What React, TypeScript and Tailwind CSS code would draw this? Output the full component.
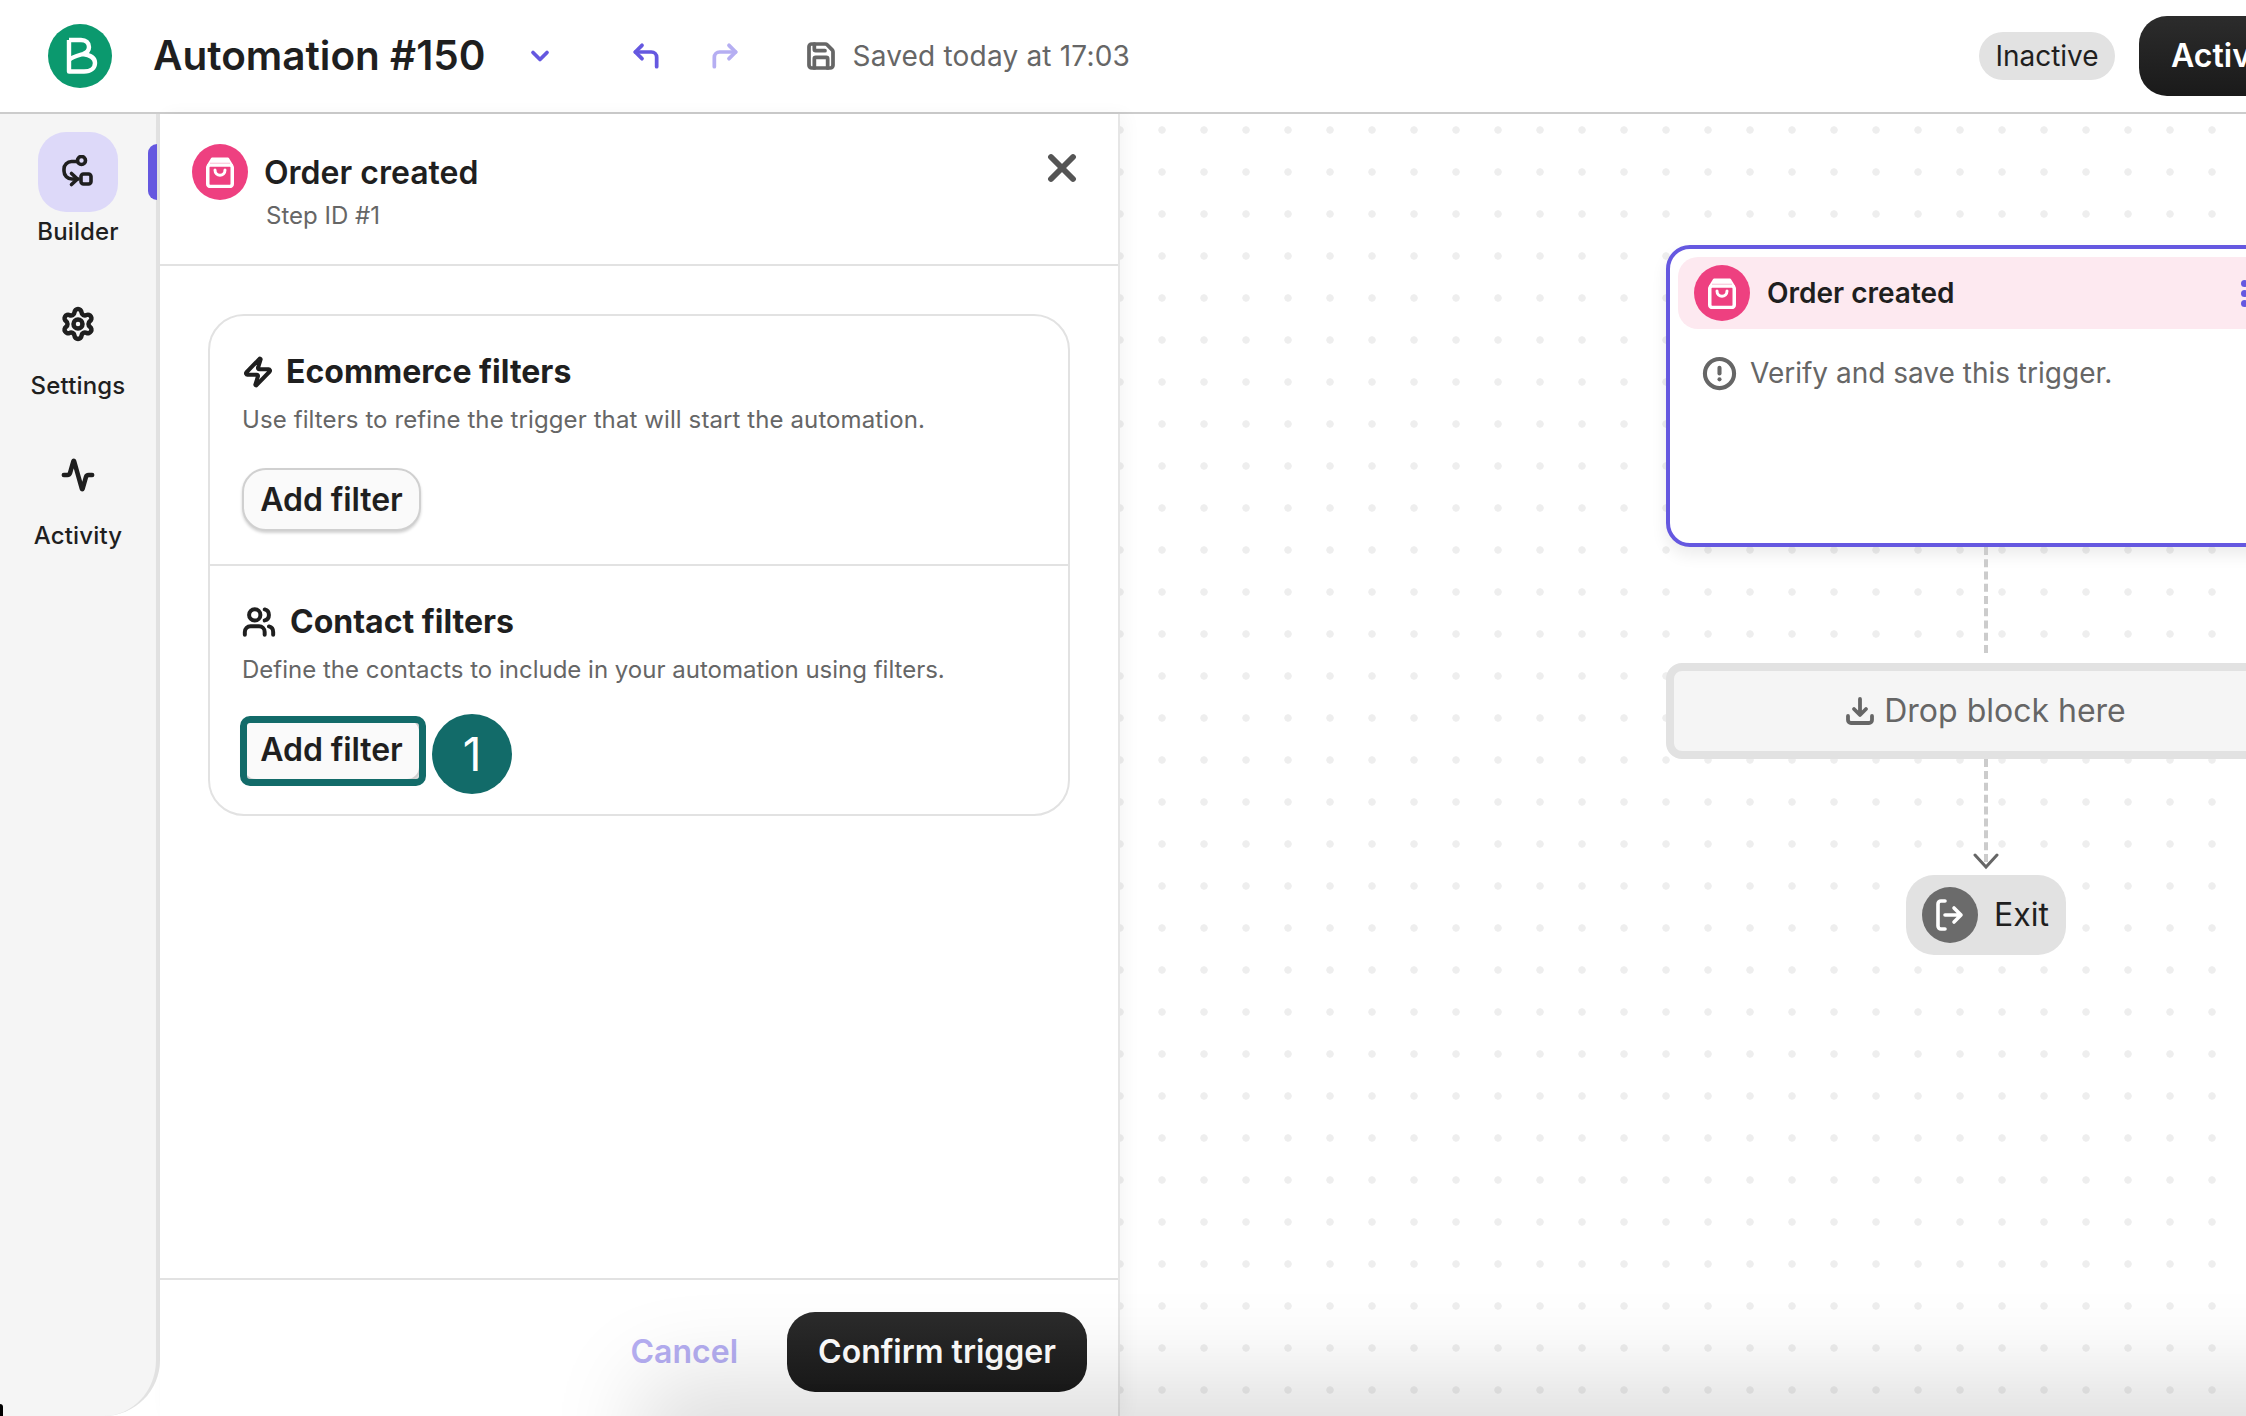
import React from 'react';
import { Activity, ChevronDown, CircleAlert, CornerUpLeft, CornerUpRight, Save, Settings, Users, X, Zap } from 'lucide-react';

const BagIcon: React.FC<{ className?: string }> = ({ className }) => (
  <svg viewBox="0 0 28 31" className={className} fill="none">
    <path d="M6 1.5H22L26 8H2Z" fill="#fff" stroke="#fff" strokeWidth="2" strokeLinejoin="round" />
    <path d="M4 6.6H24" stroke="#ee4080" strokeWidth="1.4" />
    <rect x="1.75" y="8" width="24.5" height="21.5" rx="2.5" fill="#ee4080" stroke="#fff" strokeWidth="3.5" />
    <path d="M9 13C9 20 19 20 19 13" stroke="#fff" strokeWidth="3" strokeLinecap="round" />
  </svg>
);

const BuilderIcon = () => (
  <svg viewBox="0 0 34 34" className="h-[34px] w-[34px]" fill="none" stroke="#1f1f1f" strokeWidth="3.6" strokeLinecap="round" strokeLinejoin="round">
    <circle cx="20.5" cy="5.5" r="4" />
    <rect x="20" y="19" width="10" height="10" rx="2.5" />
    <path d="M16 6.5H10.5A7.5 7.5 0 0 0 3 14V16A8 8 0 0 0 11 24H17" />
    <path d="M10.5 18.5L16.5 24L10.5 29.5" />
  </svg>
);

const AddFilter: React.FC<{ className?: string }> = ({ className }) => (
  <button className={`flex h-[63px] w-[179px] items-center justify-center border-2 border-[#d0d0d0] bg-[#fafafa] text-[32px] font-semibold tracking-[-0.1px] text-[#1f1f1f] shadow-[0_2px_3px_rgba(0,0,0,0.18)] ${className ?? 'rounded-[24px]'}`}>
    Add filter
  </button>
);

const NavItem: React.FC<{ label: string; children: React.ReactNode; className?: string }> = ({ label, children, className }) => (
  <div className={`flex flex-col items-center ${className ?? ''}`}>
    {children}
    <span className="text-[24px] leading-[30px] font-medium tracking-[0.15px] text-[#1f1f1f]">{label}</span>
  </div>
);

export default function App() {
  return (
    <div className="relative flex h-screen w-full flex-col overflow-hidden bg-white font-['Inter',sans-serif]">
      {/* top bar */}
      <header className="flex h-[114px] shrink-0 items-center border-b-2 border-[#cccccc] bg-white">
        <div className="ml-[48px] flex h-[64px] w-[64px] shrink-0 items-center justify-center rounded-full bg-[#0b996e]">
          <svg viewBox="0 0 64 64" className="h-[64px] w-[64px]" fill="none" stroke="#fff" strokeWidth="4.4" strokeLinejoin="round">
            <path d="M21 16H33C38 16 41 19 41 23C41 27 38 29 35 30C30 31.5 24 33 21 36M35 30C42 31 47 34 47 39C47 44 43 47.5 36 47.5H21V16" />
          </svg>
        </div>
        <h1 className="ml-[41px] text-[40.5px] leading-none font-semibold whitespace-nowrap text-[#1f1f1f]">Automation #150</h1>
        <ChevronDown className="ml-[41px] h-[28px] w-[28px] text-[#6558e0]" strokeWidth={3.2} />
        <CornerUpLeft className="ml-[76px] h-[32px] w-[32px] text-[#6558e0]" strokeWidth={2.8} />
        <CornerUpRight className="ml-[47px] h-[32px] w-[32px] text-[#b5aef2]" strokeWidth={2.8} />
        <Save className="ml-[64px] h-[32px] w-[32px] text-[#666666]" strokeWidth={2.8} />
        <span className="ml-[15px] text-[28px] tracking-[0.2px] whitespace-nowrap text-[#666666]">Saved today at 17:03</span>
        <span className="ml-auto flex h-[48px] w-[136px] shrink-0 items-center justify-center rounded-[24px] bg-[#e2e2e2] text-[28px] text-[#1f1f1f]">Inactive</span>
        <button className="mr-[-94px] ml-[24px] h-[80px] w-[201px] shrink-0 rounded-[28px] bg-gradient-to-b from-[#2c2c2c] to-[#1a1a1a] pr-[9px] text-[32px] font-semibold text-white">Activate</button>
      </header>

      <div className="flex min-h-0 flex-1">
        {/* nav rail */}
        <nav className="relative z-10 flex w-[160px] shrink-0 flex-col items-center rounded-br-[56px] border-r-4 border-[#e2e2e2] bg-[#f5f5f5] pt-[18px]">
          <NavItem label="Builder">
            <div className="mb-[5px] flex h-[80px] w-[80px] items-center justify-center rounded-[28px] bg-[#ddd9f9]">
              <BuilderIcon />
            </div>
          </NavItem>
          <NavItem label="Settings" className="mt-[59px]">
            <Settings className="mb-[29px] h-[36px] w-[36px] text-[#1f1f1f]" strokeWidth={3} />
          </NavItem>
          <NavItem label="Activity" className="mt-[57px]">
            <Activity className="mb-[29px] h-[34px] w-[34px] text-[#1f1f1f]" strokeWidth={3.2} />
          </NavItem>
          <div className="absolute top-[30px] right-[-1px] h-[56px] w-[9px] rounded-l-[10px] bg-[#6558e0]" />
        </nav>

        {/* trigger panel */}
        <aside className="relative z-10 flex w-[960px] shrink-0 flex-col border-r-2 border-[#e6e6e6] bg-white shadow-[6px_0_16px_rgba(0,0,0,0.04)]">
          <div className="relative h-[152px] shrink-0 border-b-2 border-[#e2e2e2] pt-[30px] pl-[32px]">
            <div className="flex items-center">
              <div className="flex h-[56px] w-[56px] items-center justify-center rounded-full bg-[#ee4080]">
                <BagIcon className="h-[31px] w-[28px]" />
              </div>
              <span className="ml-[16px] pt-[2px] text-[32px] leading-none font-semibold text-[#1f1f1f]">Order created</span>
            </div>
            <p className="mt-[1px] ml-[74px] text-[24px] leading-[30px] text-[#666666]">Step ID #1</p>
            <X className="absolute top-[32px] right-[34px] h-[44px] w-[44px] text-[#555555]" strokeWidth={3.2} />
          </div>

          <div className="flex-1 px-[48px] pt-[48px]">
            <div className="h-[502px] rounded-[36px] border-2 border-[#e2e2e2]">
              <section className="h-[250px] border-b-2 border-[#e2e2e2] pt-[36px] pl-[32px]">
                <div className="flex items-center">
                  <Zap className="h-[32px] w-[32px] text-[#1f1f1f]" strokeWidth={3} />
                  <h2 className="ml-[12px] text-[32px] leading-[40px] font-bold text-[#1f1f1f]">Ecommerce filters</h2>
                </div>
                <p className="mt-[11px] text-[24px] leading-[34px] tracking-[0.1px] text-[#666666]">Use filters to refine the trigger that will start the automation.</p>
                <div className="mt-[31px]"><AddFilter /></div>
              </section>
              <section className="relative pt-[36px] pl-[32px]">
                <div className="flex items-center">
                  <Users className="h-[34px] w-[34px] text-[#1f1f1f]" strokeWidth={2.8} />
                  <h2 className="ml-[14px] text-[32px] leading-[40px] font-bold text-[#1f1f1f]">Contact filters</h2>
                </div>
                <p className="mt-[11px] text-[24px] leading-[34px] text-[#666666]">Define the contacts to include in your automation using filters.</p>
                <div className="mt-[31px]"><AddFilter className="rounded-[14px]" /></div>
                <div className="absolute top-[150px] left-[30px] h-[70px] w-[186px] rounded-[10px] border-[7px] border-[#126b69]" />
                <div className="absolute top-[148px] left-[222px] flex h-[80px] w-[80px] items-center justify-center rounded-full bg-[#126b69] text-[46px] text-white">1</div>
              </section>
            </div>
          </div>

          <footer className="relative z-10 flex h-[138px] shrink-0 items-center justify-end border-t-2 border-[#e2e2e2] pt-[8px] pr-[31px]">
            <span className="mr-[49px] text-[32px] font-semibold text-[#b5aef2]">Cancel</span>
            <button className="h-[80px] w-[300px] rounded-[28px] bg-gradient-to-b from-[#2c2c2c] to-[#1a1a1a] text-[32px] font-semibold text-white">Confirm trigger</button>
          </footer>
        </aside>

        {/* canvas */}
        <main className="relative flex-1 bg-[radial-gradient(circle,#eeeeee_3.4px,transparent_4px)] bg-[size:42px_42px] bg-[position:-21px_-5px]">
          <div className="absolute top-[131px] left-[546px] h-[302px] w-[640px] rounded-[24px] border-4 border-[#6558e0] bg-white shadow-[0_8px_16px_rgba(0,0,0,0.08)]">
            <div className="mx-[8px] mt-[8px] flex h-[72px] items-center rounded-[20px] bg-[#fde9f0] pl-[16px]">
              <div className="flex h-[56px] w-[56px] shrink-0 items-center justify-center rounded-full bg-[#ee4080]">
                <BagIcon className="h-[31px] w-[28px]" />
              </div>
              <span className="ml-[17px] text-[28px] font-semibold whitespace-nowrap text-[#1f1f1f]">Order created</span>
              <div className="ml-[286px] flex flex-col gap-[3px]">
                <span className="h-[7px] w-[7px] rounded-full bg-[#6558e0]" />
                <span className="h-[7px] w-[7px] rounded-full bg-[#6558e0]" />
                <span className="h-[7px] w-[7px] rounded-full bg-[#6558e0]" />
              </div>
            </div>
            <div className="mt-[23px] flex items-center pl-[32px]">
              <CircleAlert className="h-[35px] w-[35px] text-[#666666]" strokeWidth={2.8} />
              <span className="ml-[13px] text-[28px] text-[#666666]">Verify and save this trigger.</span>
            </div>
          </div>

          <div className="absolute top-[433px] left-[864px] h-[106px] border-l-4 border-dashed border-[#cccccc]" />

          <div className="absolute top-[549px] left-[546px] flex h-[96px] w-[640px] items-center justify-center rounded-[16px] border-8 border-[#e2e2e2] bg-[#f5f5f5] text-[32px] text-[#666666]">
            <svg viewBox="0 0 28 28" className="mr-[10px] h-[28px] w-[28px]" fill="none" stroke="#666666" strokeWidth="3.8" strokeLinecap="round" strokeLinejoin="round">
              <path d="M14 2V17M8 12L14 18L20 12" />
              <path d="M2 19V23A3 3 0 0 0 5 26H23A3 3 0 0 0 26 23V19" />
            </svg>
            Drop block here
          </div>

          <div className="absolute top-[645px] left-[864px] h-[103px] border-l-4 border-dashed border-[#cccccc]" />
          <svg viewBox="0 0 26 17" className="absolute top-[739px] left-[853px] h-[17px] w-[26px]" fill="none" stroke="#666666" strokeWidth="3" strokeLinecap="round">
            <path d="M2 2L13 14L24 2" />
          </svg>

          <div className="absolute top-[761px] left-[786px] flex h-[80px] w-[160px] items-center rounded-[28px] bg-[#e2e2e2] pl-[16px]">
            <div className="flex h-[56px] w-[56px] items-center justify-center rounded-full bg-[#6b6b6b]">
              <svg viewBox="0 0 30 32" className="h-[32px] w-[30px]" fill="none" stroke="#fff" strokeWidth="3.6" strokeLinecap="round" strokeLinejoin="round">
                <path d="M10 2H6A3 3 0 0 0 3 5V27A3 3 0 0 0 6 30H10" />
                <path d="M10 16H26M19 9L26 16L19 23" />
              </svg>
            </div>
            <span className="ml-[16px] text-[32px] text-[#1f1f1f]">Exit</span>
          </div>
        </main>
      </div>

      {/* soft shadow rising from below the fold */}
      <div className="pointer-events-none absolute top-[1416px] right-[-100px] left-[680px] z-20 h-[60px] shadow-[0_0_90px_40px_rgba(0,0,0,0.13)]" />
      <div className="absolute bottom-0 left-0 z-30 h-[12px] w-[3px] rounded-tr-full bg-black" />
    </div>
  );
}
